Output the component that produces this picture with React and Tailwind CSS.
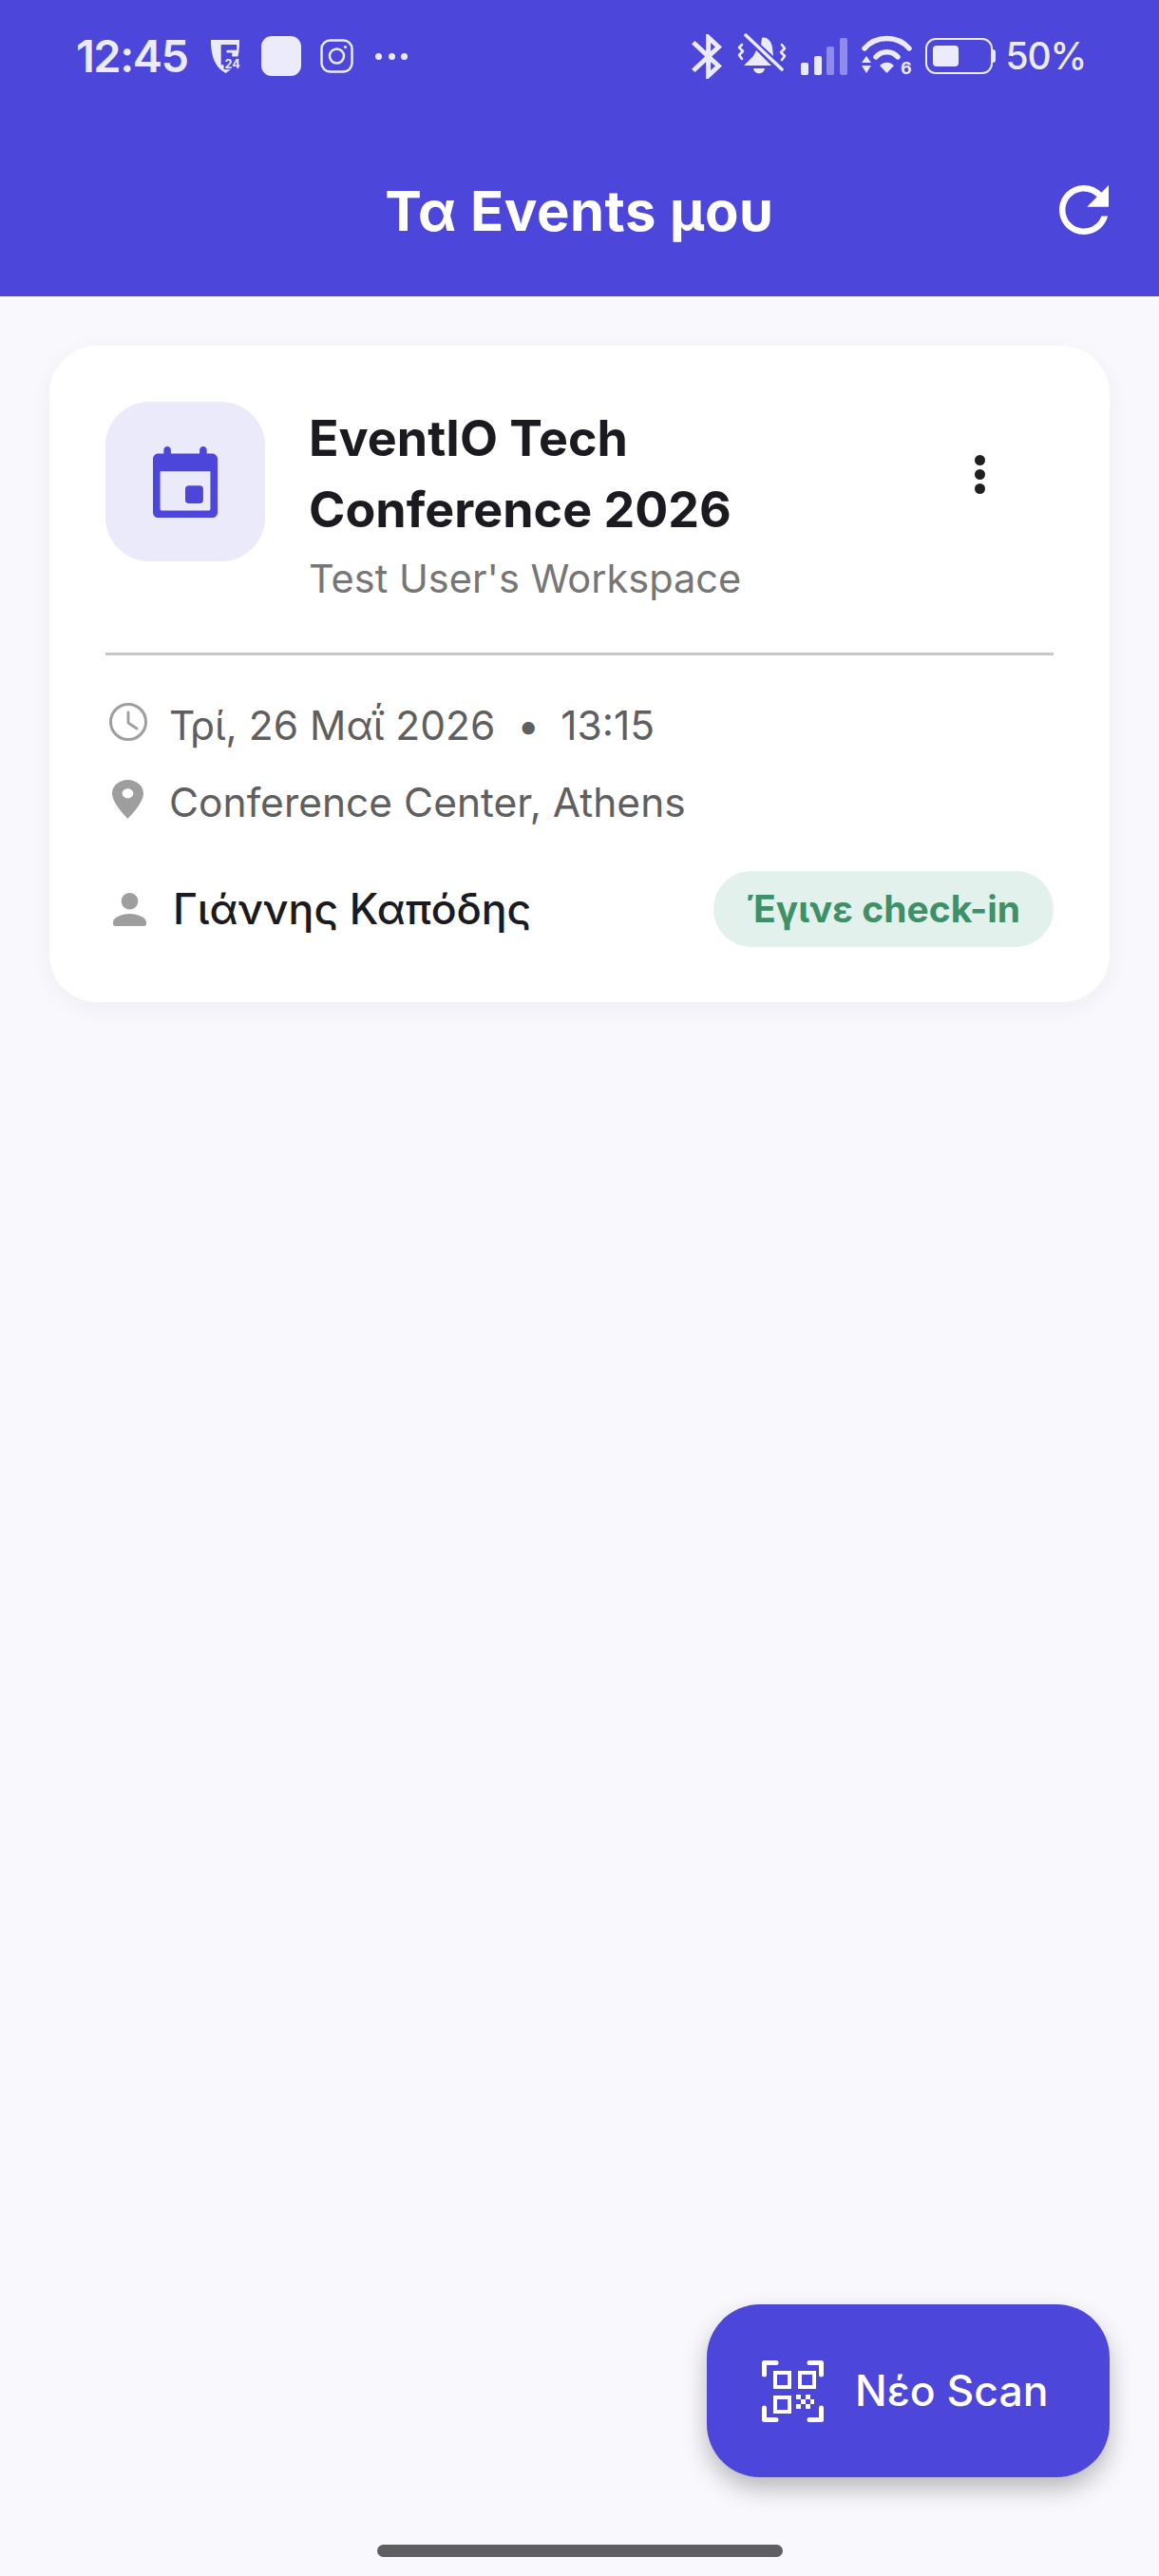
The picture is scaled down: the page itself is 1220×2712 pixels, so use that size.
const F = { fontFamily: '"Inter", "Noto Sans", sans-serif' };

function StatusLeft() {
  return (
    <div className="flex items-center">
      <span className="w-[118px] whitespace-nowrap text-[47px] leading-[50px] font-semibold text-[#ecebfb] tracking-[-1.5px]">12:45</span>
      <svg className="ml-[23px]" width="33" height="37" viewBox="0 0 34 38">
        <path d="M1 1H32C32 16 30 30 17 37C4 30 1 16 1 1Z" fill="#ecebfb" />
        <path d="M12 6V28H18V20H24V15H18V12H29V6Z" fill="#4c46db" />
        <rect x="15" y="19" width="19" height="14" fill="#4c46db" />
        <text x="16" y="32" fontSize="13" fontWeight="700" fill="#ecebfb" fontFamily="Inter">24</text>
      </svg>
      <div className="ml-[21px] h-[42px] w-[42px] rounded-[11px] bg-[#ecebfb]" />
      <svg className="ml-[20px]" width="35" height="36" viewBox="0 0 35 36" fill="none" stroke="#ecebfb" strokeWidth="2.5">
        <rect x="1.5" y="1.5" width="32" height="33" rx="9" />
        <circle cx="17.5" cy="18" r="7.5" />
        <circle cx="26.5" cy="8.5" r="1.6" fill="#ecebfb" stroke="none" />
      </svg>
      <div className="ml-[23px] flex gap-[6.5px]">
        <span className="h-[7px] w-[7px] rounded-full bg-[#ecebfb]" />
        <span className="h-[7px] w-[7px] rounded-full bg-[#ecebfb]" />
        <span className="h-[7px] w-[7px] rounded-full bg-[#ecebfb]" />
      </div>
    </div>
  );
}

function StatusRight() {
  return (
    <div className="flex items-center">
      <svg width="32" height="47" viewBox="5 2 12.71 20" preserveAspectRatio="none" fill="#ecebfb">
        <path d="M17.71 7.71L12 2h-1v7.59L6.41 5 5 6.41 10.59 12 5 17.59 6.41 19 11 14.41V22h1l5.71-5.71-4.3-4.29 4.3-4.29zM13 5.83l1.88 1.88L13 9.59V5.83zm1.88 10.46L13 18.17v-3.76l1.88 1.88z" />
      </svg>
      <svg className="ml-[16px]" width="52" height="48" viewBox="0 0 52 48" fill="none">
        <path d="M26 5C31 3 36 8 37 15L38 24L25 12Z M20 18L36 34H7L14 27C17 25 18 22 20 18Z" fill="#ecebfb" />
        <path d="M17 37H29C28 44 18 44 17 37Z" fill="#ecebfb" />
        <path d="M9 2L47 38" stroke="#ecebfb" strokeWidth="3.5" strokeLinecap="round" />
        <path d="M5 12L2 15L6 19L2 23L5 27" stroke="#ecebfb" strokeWidth="2.6" strokeLinecap="round" strokeLinejoin="round" />
        <path d="M47 12L50 16L46 20L50 24L47 28" stroke="#ecebfb" strokeWidth="2.6" strokeLinecap="round" strokeLinejoin="round" />
      </svg>
      <div className="ml-[15px] flex h-[39px] items-end gap-[5.5px]">
        <div className="h-[13px] w-[8px] rounded-[2px] bg-[#ecebfb]" />
        <div className="h-[20px] w-[8px] rounded-[2px] bg-[#ecebfb]" />
        <div className="h-[30px] w-[8px] rounded-[2px] bg-[#8f8bec]" />
        <div className="h-[39px] w-[8px] rounded-[2px] bg-[#8f8bec]" />
      </div>
      <svg className="ml-[15px] -mr-[3px]" width="56" height="50" viewBox="0 -4 56 50" fill="none">
        <path d="M3 13C15 -1 38 -1 50 13" stroke="#ecebfb" strokeWidth="5.5" strokeLinecap="round" />
        <path d="M15 22C21 15 32 15 38 22" stroke="#ecebfb" strokeWidth="5.5" strokeLinecap="round" />
        <path d="M19 31C23 26.5 30 26.5 34 31L26.5 39Z" fill="#ecebfb" />
        <path d="M5 21L10 28H0Z M0 31H10L5 39Z" fill="#ecebfb" />
        <text x="41" y="40" fontSize="18" fontWeight="700" fill="#ecebfb" fontFamily="Inter">6</text>
      </svg>
      <div className="relative ml-[14px] flex h-[38px] items-center">
        <div className="h-[38px] w-[71px] rounded-[11px] border-[2.5px] border-[#ecebfb] p-[6px]">
          <div className="h-full w-[27px] rounded-[4px] bg-[#ecebfb]" />
        </div>
        <div className="h-[14px] w-[3px] rounded-r-[3px] bg-[#ecebfb]" />
      </div>
      <span className="ml-[11px] text-[39px] leading-[48px] font-medium tracking-[-1.2px] text-[#ecebfb]">50%</span>
    </div>
  );
}

export default function App() {
  return (
    <div style={F} className="flex h-[2712px] w-[1220px] flex-col overflow-hidden bg-[#f8f8fd]">
      <header className="h-[312px] shrink-0 bg-[#4c46db]">
        <div className="flex h-[118px] items-center justify-between pr-[77px] pl-[80px]">
          <StatusLeft />
          <StatusRight />
        </div>
        <div className="flex h-[194px] items-start justify-between pr-[40px] pl-[118px] pt-[71px]">
          <div className="w-[0px]" />
          <h1 className="text-[58px] leading-[66px] font-bold tracking-[0.5px] text-white">Τα Events μου</h1>
          <svg className="-mt-[7px]" width="78" height="78" viewBox="0 0 24 24" fill="#fff">
            <path d="M17.65 6.35C16.2 4.9 14.21 4 12 4c-4.42 0-7.99 3.58-7.99 8s3.57 8 7.99 8c3.73 0 6.84-2.55 7.73-6h-2.08c-.82 2.33-3.04 4-5.65 4-3.31 0-6-2.69-6-6s2.69-6 6-6c1.66 0 3.14.69 4.22 1.78L13 11h7V4l-2.35 2.35z" />
          </svg>
        </div>
      </header>

      <main className="flex flex-1 flex-col px-[52px] pt-[52px]">
        <section className="h-[691px] rounded-[50px] bg-white px-[59px] pt-[59px] shadow-[0_6px_24px_rgba(30,30,80,0.05)]">
          <div className="flex h-[264px] items-start">
            <div className="flex h-[168px] w-[168px] shrink-0 items-center justify-center rounded-[46px] bg-[#ebeafa]">
              <svg width="68" height="75" viewBox="3 1 18 20" preserveAspectRatio="none" fill="#4c46db">
                <path fillRule="evenodd" d="M7 1c.55 0 1 .45 1 1v1h8V2c0-.55.45-1 1-1s1 .45 1 1v1h1.5C20.33 3 21 3.67 21 4.5v15c0 .83-.67 1.5-1.5 1.5h-15C3.67 21 3 20.33 3 19.5v-15C3 3.67 3.67 3 4.5 3H6V2c0-.55.45-1 1-1zM5 8v10.5c0 .28.22.5.5.5h13c.28 0 .5-.22.5-.5V8H5z" />
                <rect x="12" y="12" width="5" height="5" rx="1" />
              </svg>
            </div>
            <div className="ml-[46px] flex-1 pt-[1px]">
              <h2 className="text-[52px] leading-[75px] font-bold text-[#1a1a20]">EventIO Tech<br />Conference 2026</h2>
              <p className="mt-[10px] text-[41.5px] leading-[50px] text-[#767676]">Test User's Workspace</p>
            </div>
            <div className="mt-[56px] mr-[72px] flex flex-col gap-[4px]">
              <span className="h-[11px] w-[11px] rounded-full bg-[#1f1f22]" />
              <span className="h-[11px] w-[11px] rounded-full bg-[#1f1f22]" />
              <span className="h-[11px] w-[11px] rounded-full bg-[#1f1f22]" />
            </div>
          </div>
          <div className="h-[3px] bg-[#c8c7d0]" />
          <div className="mt-[49px] flex h-[50px] items-center text-[42.5px] leading-[50px] text-[#5f5f5f]">
            <svg className="ml-[4px] -mt-[8px] shrink-0" width="40" height="40" viewBox="0 0 40 40" fill="none" stroke="#9e9e9e">
              <circle cx="20" cy="20" r="18.5" strokeWidth="3" />
              <path d="M20 10V21L29 27" strokeWidth="2.8" strokeLinecap="round" strokeLinejoin="round" />
            </svg>
            <span className="ml-[23px] whitespace-nowrap">Τρί, 26 Μαΐ 2026</span>
            <span className="ml-[23px]">•</span>
            <span className="ml-[22px]">13:15</span>
          </div>
          <div className="mt-[31px] flex h-[50px] items-center text-[42.5px] leading-[50px] text-[#5f5f5f]">
            <svg className="ml-[7px] -mt-[8px] shrink-0" width="33" height="41" viewBox="5 2 14 20" preserveAspectRatio="none" fill="#9e9e9e">
              <path d="M12 2C8.13 2 5 5.13 5 9c0 5.25 7 13 7 13s7-7.75 7-13c0-3.87-3.13-7-7-7zm0 9.5c-1.38 0-2.5-1.12-2.5-2.5s1.12-2.5 2.5-2.5 2.5 1.12 2.5 2.5-1.12 2.5-2.5 2.5z" />
            </svg>
            <span className="ml-[27px]">Conference Center, Athens</span>
          </div>
          <div className="mt-[47px] flex h-[80px] items-center justify-between">
            <div className="flex items-center">
              <svg className="ml-[8px] shrink-0" width="35" height="35" viewBox="4 4 16 16" fill="#9e9e9e">
                <path d="M12 12c2.21 0 4-1.79 4-4s-1.79-4-4-4-4 1.79-4 4 1.79 4 4 4zm0 2c-2.67 0-8 1.34-8 4v1c0 .55.45 1 1 1h14c.55 0 1-.45 1-1v-1c0-2.66-5.33-4-8-4z" />
              </svg>
              <span className="ml-[28px] text-[44.5px] leading-[56px] font-medium text-[#1a1a20]">Γιάννης Καπόδης</span>
            </div>
            <div className="flex h-[80px] w-[358px] items-center justify-center rounded-full bg-[#e2f1eb] text-[39px] font-bold text-[#3f9069]">Έγινε check-in</div>
          </div>
        </section>

        <div className="mt-auto flex justify-end">
          <button className="flex h-[182px] w-[424px] items-center rounded-[56px] bg-[#4c46db] pl-[58px] shadow-[0_12px_26px_rgba(0,0,0,0.26)]">
            <svg width="65" height="65" viewBox="0 0 65 65" fill="none">
              <g stroke="#fff" strokeWidth="5" strokeLinecap="round" strokeLinejoin="round">
                <path d="M2.5 15V2.5H15" />
                <path d="M50 2.5H62.5V15" />
                <path d="M2.5 50V62.5H15" />
                <path d="M50 62.5H62.5V50" />
              </g>
              <g stroke="#fff" strokeWidth="4">
                <rect x="14" y="13" width="15" height="15" />
                <rect x="40" y="13" width="15" height="15" />
                <rect x="14" y="39" width="15" height="15" />
              </g>
              <g fill="#fff">
                <rect x="36" y="36" width="5" height="5" />
                <rect x="46" y="36" width="5" height="5" />
                <rect x="41" y="41" width="5" height="5" />
                <rect x="36" y="46" width="5" height="5" />
                <rect x="46" y="46" width="5" height="5" />
                <rect x="51" y="41" width="4" height="5" />
              </g>
            </svg>
            <span className="ml-[33px] text-[44.5px] leading-[54px] font-medium text-white">Νέο Scan</span>
          </button>
        </div>
        <div className="mt-[71px] mb-[20px] flex justify-center">
          <div className="h-[13px] w-[427px] rounded-full bg-[#5f5f62]" />
        </div>
      </main>
    </div>
  );
}
